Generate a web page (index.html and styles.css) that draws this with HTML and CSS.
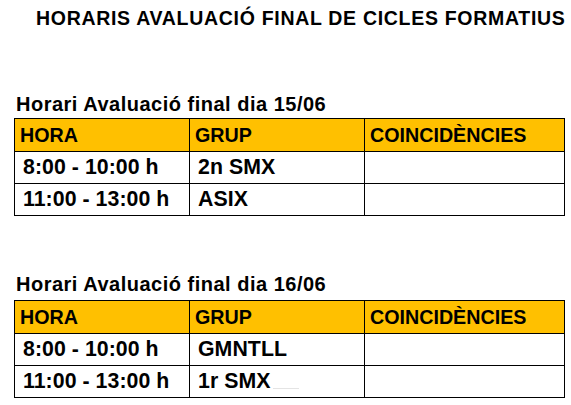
FILE: index.html
```html
<!DOCTYPE html>
<html lang="ca">
<head>
<meta charset="utf-8">
<title>Horaris avaluació final</title>
<link rel="stylesheet" href="styles.css">
</head>
<body>
<h1 class="title">HORARIS AVALUACIÓ FINAL DE CICLES FORMATIUS</h1>

<section class="day day-first">
  <h2 class="subtitle">Horari Avaluació final dia 15/06</h2>
  <table class="schedule">
    <colgroup><col class="c1"><col class="c2"><col class="c3"></colgroup>
    <thead>
      <tr><th>HORA</th><th>GRUP</th><th>COINCIDÈNCIES</th></tr>
    </thead>
    <tbody>
      <tr><td>8:00 - 10:00 h</td><td>2n SMX</td><td></td></tr>
      <tr><td>11:00 - 13:00 h</td><td>ASIX</td><td></td></tr>
    </tbody>
  </table>
</section>

<section class="day day-second">
  <h2 class="subtitle">Horari Avaluació final dia 16/06</h2>
  <table class="schedule">
    <colgroup><col class="c1"><col class="c2"><col class="c3"></colgroup>
    <thead>
      <tr><th>HORA</th><th>GRUP</th><th>COINCIDÈNCIES</th></tr>
    </thead>
    <tbody>
      <tr><td>8:00 - 10:00 h</td><td>GMNTLL</td><td></td></tr>
      <tr><td>11:00 - 13:00 h</td><td>1r SMX<span class="trail"></span></td><td></td></tr>
    </tbody>
  </table>
</section>
</body>
</html>
```

FILE: styles.css
```css
html, body {
  margin: 0;
  padding: 0;
  background: #ffffff;
}

body {
  font-family: "Liberation Sans", Arial, sans-serif;
  color: #000000;
  width: 571px;
  height: 405px;
  overflow: hidden;
}

.title {
  margin: 7px 0 0 36px;
  font-size: 19.5px;
  line-height: 22px;
  font-weight: bold;
  letter-spacing: 0.7px;
  white-space: nowrap;
}

.day {
  margin-left: 14px;
}

.day-first {
  margin-top: 64px;
}

.day-second {
  margin-top: 57px;
}

.subtitle {
  margin: 0 0 3px 2px;
  font-size: 20px;
  line-height: 22px;
  font-weight: bold;
  letter-spacing: 0.5px;
  white-space: nowrap;
}

.day-second .subtitle {
  margin-bottom: 5px;
}

.schedule {
  border-collapse: collapse;
  table-layout: fixed;
  width: 550px;
}

.c1 { width: 175px; }
.c2 { width: 175px; }
.c3 { width: 200px; }

.schedule th,
.schedule td {
  border: 1px solid #000000;
  font-weight: bold;
  text-align: left;
  vertical-align: middle;
  white-space: nowrap;
  padding: 0;
}

.schedule th {
  background: #ffc000;
  font-size: 19.7px;
  height: 32px;
  padding-left: 5px;
}

.schedule td {
  font-size: 21.3px;
  height: 31px;
  padding-left: 8px;
  letter-spacing: 0.05px;
}

.trail {
  display: inline-block;
  width: 26px;
  height: 1px;
  margin-left: 2px;
  background: #e4e4e4;
  vertical-align: -1px;
}
```
